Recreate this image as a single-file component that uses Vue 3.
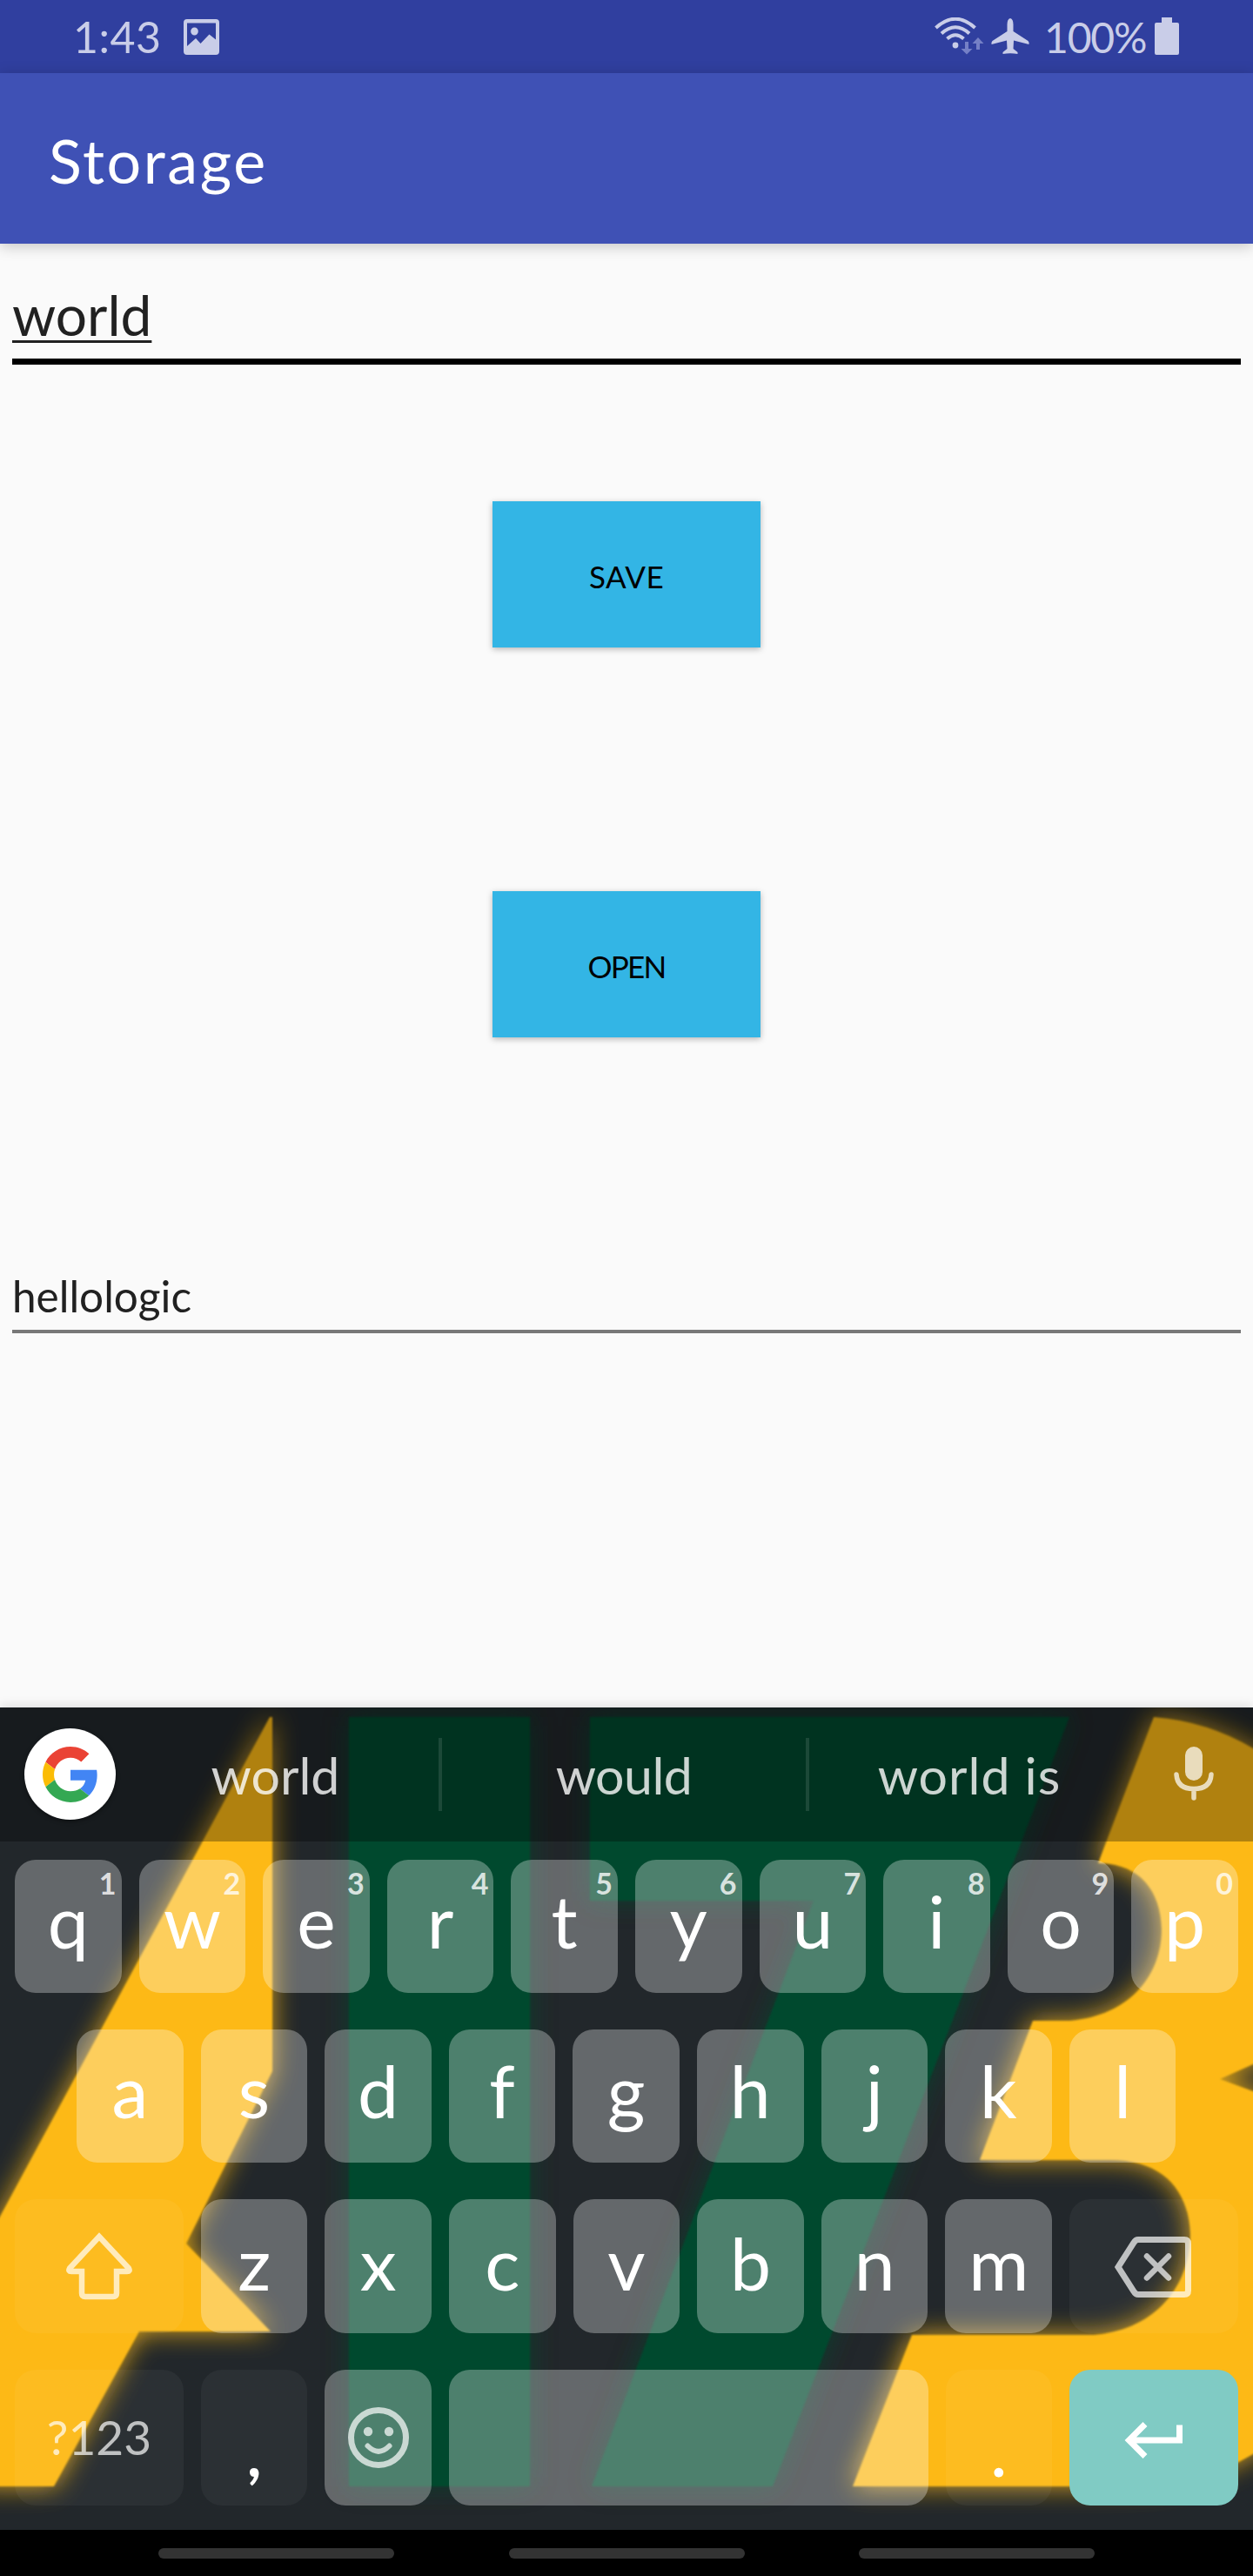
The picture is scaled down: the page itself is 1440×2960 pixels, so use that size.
<script setup>
import { ref } from 'vue'

const title = 'Storage'
const draft = ref('world')
const stored = ref('hellologic')
const suggestions = [
  { text: 'world', cls: 'first' },
  { text: 'would', cls: 'middle' },
  { text: 'world is', cls: 'last' },
]
const topRow = 'qwertyuiop'.split('').map((letter, i) => ({ letter, hint: (i + 1) % 10 }))
const homeRow = 'asdfghjkl'.split('')
const lowerRow = 'zxcvbnm'.split('')
</script>

<template>
  <div class="screen">
    <header class="status">
      <div class="status-left">
        <span class="clock">1:43</span>
        <svg class="picture" width="41" height="41" viewBox="0 0 41 41">
          <path fill-rule="evenodd" d="M4 0H37Q41 0 41 4V37Q41 41 37 41H4Q0 41 0 37V4Q0 0 4 0ZM4 4.500V31L14 22L19.500 28L29.500 17.500L37 23.500V4.500ZM12.500 9.500a4.300 4.500 0 1 1 0 9a4.300 4.500 0 1 1 0-9Z" />
        </svg>
      </div>
      <div class="status-right">
        <svg class="wifi" width="58" height="44" viewBox="0 0 58 44">
          <g fill="none" stroke="#c9cde8" stroke-width="4">
            <path d="M1.500 12Q24-8.500 46.500 12" />
            <path d="M8 18.500Q24 4 40 18.500" />
            <path d="M14.500 24.500Q24 16 33.500 24.500" />
          </g>
          <circle cx="24" cy="32" r="3.400" fill="#c9cde8" />
          <path d="M35 28h4v8h4.500L37 42.500L30.500 36H35ZM48 37V30H43.500L50 23L56.500 30H52V37Z" fill="#7580c6" />
        </svg>
        <svg class="plane" width="44" height="42" viewBox="0 0 44 42">
          <path d="M22 0Q25.500 1 25.500 7V15L42.500 26Q44 27.500 43.500 30L26 25.500L25.500 35L30.500 39V41Q22 39.500 13.500 41V39L18.500 35L18 25.500L.5 30Q0 27.500 1.500 26L18.500 15V7Q18.500 1 22 0Z" />
        </svg>
        <span class="percent">100%</span>
        <svg class="battery" width="28" height="43" viewBox="0 0 28 43">
          <path d="M8 0H20V6H26Q28 6 28 8V41Q28 43 26 43H2Q0 43 0 41V8Q0 6 2 6H8Z" />
        </svg>
      </div>
    </header>

    <div class="appbar"><h1>{{ title }}</h1></div>

    <main class="content">
      <div class="field field-active"><span>{{ draft }}</span></div>
      <button class="action save">SAVE</button>
      <button class="action open">OPEN</button>
      <div class="field field-idle"><span>{{ stored }}</span></div>
    </main>

    <section class="keyboard">
      <svg class="wallpaper" width="1440" height="945" viewBox="0 1962 1440 945">
        <defs>
          <filter id="glow" x="-10%" y="-10%" width="120%" height="120%">
            <feGaussianBlur stdDeviation="15" />
          </filter>
          <filter id="soft" x="-5%" y="-5%" width="110%" height="110%">
            <feGaussianBlur stdDeviation="1" />
          </filter>
          <g id="green">
            <path d="M401 1973H609V2857H401Z" />
            <path d="M678 1973H1229L888 2857H680L935 2184H678Z" />
          </g>
          <g id="gold">
            <path d="M310 1973H313V2380L214 2578L311 2679H160L62 2857H-30V2603L0 2547Z" />
            <path d="M1326 1973Q1388 1978 1440 2009L1480 2036V2354L1440 2372L1402 2389L1440 2403L1480 2420V2790L1440 2820Q1380 2857 1275 2857H980L1048 2683H1257C1330 2677 1368 2625 1368 2567C1366 2515 1335 2482 1276 2482H1126L1187 2322H1230C1298 2316 1335 2270 1335 2217C1334 2170 1307 2141 1262 2141Z" />
          </g>
        </defs>
        <use href="#green" fill="#03492f" filter="url(#glow)" opacity=".7" />
        <use href="#gold" fill="#fdb913" filter="url(#glow)" opacity=".85" />
        <use href="#green" fill="#03492f" filter="url(#soft)" />
        <use href="#gold" fill="#fdb913" filter="url(#soft)" />
      </svg>

      <div class="strip">
        <div class="google">
          <svg width="64" height="64" viewBox="0 0 48 48">
            <path fill="#ea4335" d="M24 9.500c3.540 0 6.710 1.220 9.210 3.600l6.850-6.850C35.900 2.380 30.470 0 24 0 14.620 0 6.510 5.380 2.560 13.220l7.980 6.190C12.430 13.720 17.740 9.500 24 9.500z" />
            <path fill="#4285f4" d="M46.980 24.550c0-1.570-.15-3.090-.38-4.550H24v9.020h12.940c-.58 2.960-2.260 5.480-4.780 7.180l7.730 6c4.510-4.180 7.090-10.360 7.090-17.650z" />
            <path fill="#fbbc05" d="M10.530 28.590c-.48-1.450-.76-2.990-.76-4.590s.27-3.140.76-4.590l-7.980-6.190C.92 16.460 0 20.120 0 24c0 3.880.92 7.540 2.560 10.780l7.970-6.190z" />
            <path fill="#34a853" d="M24 48c6.480 0 11.930-2.130 15.890-5.810l-7.730-6c-2.150 1.450-4.920 2.300-8.160 2.300-6.260 0-11.570-4.220-13.470-9.910l-7.980 6.190C6.510 42.620 14.620 48 24 48z" />
          </svg>
        </div>
        <div class="words">
          <span v-for="s in suggestions" :key="s.text" class="word" :class="s.cls">{{ s.text }}</span>
        </div>
        <svg class="mic" width="46" height="62" viewBox="0 0 46 62">
          <rect x="13" y="0" width="20" height="39" rx="10" fill="currentColor" />
          <path d="M3 32Q4 48.500 23 48.500Q42 48.500 43 32M23 49V59" fill="none" stroke="currentColor" stroke-width="5.500" stroke-linecap="round" />
        </svg>
      </div>

      <div class="keys">
        <div class="row">
          <div v-for="k in topRow" :key="k.letter" class="key">
            {{ k.letter }}<span class="hint">{{ k.hint }}</span>
          </div>
        </div>
        <div class="row home">
          <div v-for="k in homeRow" :key="k" class="key">{{ k }}</div>
        </div>
        <div class="row lower">
          <div class="key wide faint icon">
            <svg width="80" height="78" viewBox="0 0 80 78">
              <path d="M40 5L74 41.500Q76 45 72 45H60V70Q60 74 56 74H24Q20 74 20 70V45H8Q4 45 6 41.500Z" fill="none" stroke="currentColor" stroke-width="6.500" />
            </svg>
          </div>
          <div v-for="k in lowerRow" :key="k" class="key">{{ k }}</div>
          <div class="key wide faint icon erase">
            <svg width="88" height="70" viewBox="0 0 88 70">
              <path d="M27 3.500H80Q84.500 3.500 84.500 8V62Q84.500 66.500 80 66.500H27Q24 66.500 22 63L4 35L22 7Q24 3.500 27 3.500Z" fill="none" stroke="currentColor" stroke-width="7" />
              <path d="M37 22.500L62 47.500M62 22.500L37 47.500" stroke="currentColor" stroke-width="6.500" stroke-linecap="round" />
            </svg>
          </div>
        </div>
        <div class="row bottom">
          <div class="key wide faint symbols">?123</div>
          <div class="key faint mark">,</div>
          <div class="key icon">
            <svg width="72" height="72" viewBox="0 0 72 72">
              <circle cx="36" cy="36" r="31.500" fill="none" stroke="currentColor" stroke-width="7" />
              <circle cx="24" cy="29" r="5.200" fill="currentColor" />
              <circle cx="48" cy="29" r="5.200" fill="currentColor" />
              <path d="M23.500 45.500Q36 58 48.500 45.500" fill="none" stroke="currentColor" stroke-width="6" stroke-linecap="round" />
            </svg>
          </div>
          <div class="key space"></div>
          <div class="key faint mark">.</div>
          <div class="key wide enter">
            <svg width="68" height="42" viewBox="0 0 68 42">
              <path d="M63.500 3.500V21H7M24 2.500L5.500 21L24 39.500" fill="none" stroke="#fff" stroke-width="7" />
            </svg>
          </div>
        </div>
      </div>
    </section>

    <nav class="navbar"><i></i><i></i><i></i></nav>
  </div>
</template>

<style>
body {
  background: #fafafa;
}
</style>

<style scoped>
.screen {
  width: 1440px;
  height: 2960px;
  display: flex;
  flex-direction: column;
  overflow: hidden;
  background: #fafafa;
  font-family: Lato, "Open Sans", sans-serif;
}
.screen svg {
  display: block;
  flex: none;
}
.status {
  height: 84px;
  flex: none;
  display: flex;
  justify-content: space-between;
  padding: 0 85px 0 84px;
  background: #303f9f;
  color: #c9cde8;
  fill: #c9cde8;
  font-size: 50px;
  line-height: 85px;
}
.status-left,
.status-right {
  display: flex;
}
.clock {
  width: 127px;
  letter-spacing: 0.500px;
}
.picture {
  margin-top: 22px;
}
.wifi {
  margin: 20px 7px 0 0;
}
.plane {
  margin: 21px 17px 0 0;
}
.percent {
  width: 127px;
  font-size: 48px;
  letter-spacing: -1.200px;
}
.battery {
  margin-top: 20px;
}
.appbar {
  height: 196px;
  flex: none;
  display: flex;
  align-items: center;
  padding: 4px 56px 0;
  box-sizing: border-box;
  position: relative;
  background: #3f51b5;
  box-shadow: 0 3px 16px rgba(0, 0, 0, 0.22);
}
h1 {
  margin: 0;
  color: #fff;
  font-size: 70px;
  font-weight: 400;
  line-height: 80px;
  letter-spacing: 2.600px;
}
.content {
  height: 1682px;
  flex: none;
  display: flex;
  flex-direction: column;
  align-items: center;
}
.field {
  width: 1412px;
  box-sizing: border-box;
  color: #212121;
}
.field-active {
  height: 139px;
  padding-top: 44px;
  border-bottom: 7px solid #000;
  font-size: 64px;
  line-height: 76px;
}
.field-active span {
  text-decoration: underline;
  text-decoration-thickness: 3px;
  text-underline-offset: 5px;
  text-decoration-skip-ink: none;
}
.field-idle {
  height: 79px;
  margin-top: 261px;
  padding-top: 6px;
  border-bottom: 4px solid #787878;
  font-size: 49.500px;
  line-height: 60px;
}
.action {
  width: 308px;
  height: 168px;
  flex: none;
  padding: 4px 0 0;
  border: 0;
  background: #33b5e5;
  box-shadow: 0 2px 7px rgba(0, 0, 0, 0.28);
  color: #000;
  font-family: inherit;
  font-size: 35px;
}
.save {
  margin-top: 157px;
  letter-spacing: 0.500px;
}
.open {
  margin-top: 280px;
  letter-spacing: -1.800px;
}
.keyboard {
  height: 945px;
  flex: none;
  position: relative;
  background: #22272b;
  box-shadow: 0 -2px 12px rgba(0, 0, 0, 0.12);
}
.wallpaper {
  position: absolute;
  inset: 0;
}
.strip {
  height: 154px;
  position: relative;
  display: flex;
  align-items: flex-start;
  background: rgba(0, 0, 0, 0.3);
}
.google {
  width: 105px;
  height: 105px;
  margin: 24px 0 0 28px;
  display: flex;
  align-items: center;
  justify-content: center;
  border-radius: 50%;
  background: #fff;
  box-shadow: 0 2px 5px rgba(0, 0, 0, 0.4);
}
.words {
  flex: 1;
  display: flex;
  padding-top: 35px;
}
.word {
  height: 84px;
  box-sizing: border-box;
  text-align: center;
  color: rgba(255, 255, 255, 0.8);
  font-size: 59px;
  line-height: 86px;
  white-space: nowrap;
}
.word.first {
  width: 375px;
  padding-right: 4px;
  border-right: 4px solid rgba(255, 255, 255, 0.11);
}
.word.middle {
  width: 422px;
  border-right: 4px solid rgba(255, 255, 255, 0.11);
  letter-spacing: -0.500px;
}
.word.last {
  width: 368px;
  letter-spacing: 1px;
}
.mic {
  margin: 45px 45px 0 0;
  color: rgba(255, 255, 255, 0.72);
}
.keys {
  position: relative;
  display: flex;
  flex-direction: column;
  gap: 42px;
  padding-top: 21px;
}
.row {
  height: 153px;
  display: flex;
  gap: 20px;
  padding: 0 17px;
}
.row.home {
  padding: 0 88px;
}
.row.lower {
  height: 154px;
}
.row.bottom {
  height: 156px;
}
.key {
  width: 122.600px;
  flex: none;
  box-sizing: border-box;
  position: relative;
  display: flex;
  align-items: center;
  justify-content: center;
  padding-bottom: 14px;
  border-radius: 24px;
  background: rgba(255, 255, 255, 0.3);
  color: #fff;
  font-size: 84px;
  line-height: 100px;
}
.row.lower .key:not(.icon) {
  padding-bottom: 9px;
}
.key.wide {
  width: 193.900px;
}
.key.faint {
  background: rgba(255, 255, 255, 0.045);
}
.key.icon {
  padding: 0;
  color: rgba(255, 255, 255, 0.7);
}
.key.erase {
  padding: 2px 2px 0 0;
}
.key.space {
  flex: 1;
}
.key.symbols {
  padding: 0 0 2px;
  color: rgba(255, 255, 255, 0.7);
  font-size: 55px;
}
.key.mark {
  padding: 36px 0 0;
  font-weight: 700;
  font-size: 70px;
}
.key.enter {
  padding: 6px 0 0;
  background: #80cbc4;
}
.hint {
  position: absolute;
  top: 7px;
  right: 6px;
  color: rgba(255, 255, 255, 0.8);
  font-size: 34px;
  font-weight: 700;
  line-height: 40px;
}
.navbar {
  height: 53px;
  flex: none;
  display: flex;
  align-items: center;
  justify-content: center;
  gap: 131.500px;
  background: #000;
}
.navbar i {
  width: 271px;
  height: 12px;
  border-radius: 6px;
  background: #333;
}
</style>
